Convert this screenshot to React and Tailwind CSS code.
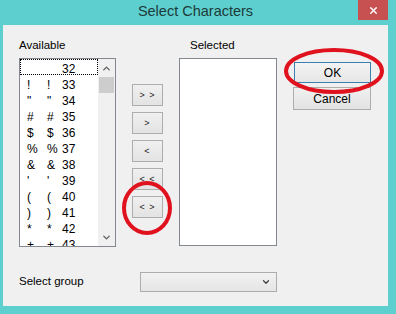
import { X, ChevronUp, ChevronDown } from 'lucide-react';

const chars = [
  [' ', 32], ['!', 33], ['"', 34], ['#', 35], ['$', 36], ['%', 37],
  ['&', 38], ["'", 39], ['(', 40], [')', 41], ['*', 42], ['+', 43],
];

const MoveButton = ({ label }) => (
  <div className="h-[22px] w-[31px] flex items-center justify-center border border-[#adadad] bg-gradient-to-b from-[#f0f0f0] to-[#e3e3e3] text-[9px] leading-none text-[#222] tracking-[1px]">
    {label}
  </div>
);

const App = () => {

  return (

    <div
      className="relative w-[396px] h-[314px] bg-[#5dcfce] pl-[3px] pr-[8px] flex flex-col overflow-hidden"
      style={{ fontFamily: '"Liberation Sans", Arial, sans-serif' }}
    >

      {/* TITLE BAR */}

      <div className="h-[25px] flex items-center justify-center text-[14.5px] text-[#1d3a3a] pb-[1px]">
        Select Characters
      </div>

      <div className="absolute top-0 left-[358px] w-[30px] h-[20px] bg-[#c75050] flex items-center justify-center">
        <X size={11} strokeWidth={3} color="#ffffff" />
      </div>

      {/* CLIENT */}

      <div className="h-[281px] bg-[#f0f0f0] flex flex-col text-[11.5px] text-black">

        <div className="flex px-[16px] pt-[13px]">

          {/* AVAILABLE */}

          <div className="w-[97px] flex flex-col">

            <div className="h-[14px] leading-[14px] mb-[6px]">
              Available
            </div>

            <div className="h-[189px] border border-[#828790] bg-white flex overflow-hidden">

              <div className="flex-1 flex flex-col text-[12px]">

                {chars.map(([c, n], index) => (

                  <div
                    key={n}
                    className={
                      index === 0
                        ? 'h-[16px] leading-[20px] flex pl-[7px] shrink-0 outline-1 outline-dotted outline-black -outline-offset-1'
                        : 'h-[16px] leading-[20px] flex pl-[7px] shrink-0'
                    }
                  >
                    <span className="w-[20px]">{c}</span>
                    <span className="w-[15px]">{c}</span>
                    <span>{n}</span>
                  </div>

                ))}

              </div>

              <div className="w-[17px] bg-[#f0f0f0] flex flex-col items-center">

                <div className="h-[18px] flex items-center justify-center text-[#606060]">
                  <ChevronUp size={11} strokeWidth={3} />
                </div>

                <div className="w-[15px] h-[16px] bg-[#cdcdcd]" />

                <div className="flex-1" />

                <div className="h-[18px] flex items-center justify-center text-[#606060]">
                  <ChevronDown size={11} strokeWidth={3} />
                </div>

              </div>

            </div>

          </div>

          {/* MOVE BUTTONS */}

          <div className="w-[31px] ml-[16px] pt-[46px] flex flex-col gap-[6px]">
            <MoveButton label="> >" />
            <MoveButton label=">" />
            <MoveButton label="<" />
            <MoveButton label="< <" />
            <MoveButton label="< >" />
          </div>

          {/* SELECTED */}

          <div className="w-[98px] ml-[16px] flex flex-col">

            <div className="h-[14px] leading-[14px] mb-[6px] pl-[11px]">
              Selected
            </div>

            <div className="h-[188px] border border-[#828790] bg-white" />

          </div>

          {/* OK / CANCEL */}

          <div className="w-[78px] ml-[16px] pt-[24px] flex flex-col">

            <div className="h-[21px] ml-[1px] border border-[#3c7fb1] bg-gradient-to-b from-[#f4f4f4] to-[#e6e6e6] flex items-center justify-center text-[12px]">
              OK
            </div>

            <div className="h-[23px] mt-[4px] border border-[#adadad] bg-gradient-to-b from-[#f0f0f0] to-[#e3e3e3] flex items-center justify-center text-[12px]">
              Cancel
            </div>

          </div>

        </div>

        {/* SELECT GROUP */}

        <div className="flex items-center px-[16px] mt-[25px]">

          <div className="w-[121px]">
            Select group
          </div>

          <div className="w-[137px] h-[20px] border border-[#acacac] bg-gradient-to-b from-[#f2f2f2] to-[#e5e5e5] flex items-center justify-end pr-[5px] text-[#404040]">
            <ChevronDown size={10} strokeWidth={3} />
          </div>

        </div>

      </div>

      {/* RED ANNOTATIONS */}

      <svg
        className="absolute inset-0 pointer-events-none"
        width="396"
        height="314"
      >
        <ellipse cx="334" cy="71" rx="48" ry="21" fill="none" stroke="#e0121e" strokeWidth="4" />
        <ellipse cx="147" cy="208" rx="23" ry="25" fill="none" stroke="#e0121e" strokeWidth="4" />
      </svg>

    </div>

  );
};

export default App;
